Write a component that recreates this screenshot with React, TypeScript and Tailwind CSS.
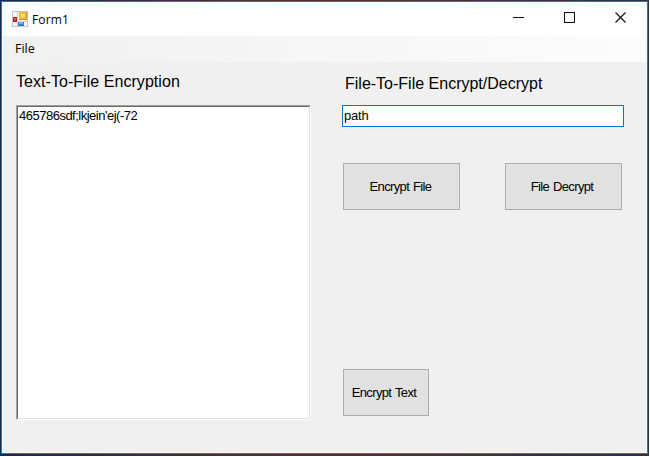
import type { ReactNode } from "react";

function FormIcon() {
  return (
    <svg width="16" height="16" viewBox="0 0 16 16" shapeRendering="crispEdges">
      <rect x="0.5" y="0.5" width="15" height="15" fill="#f4f4f4" stroke="#c4c4c4" />
      <path d="M5.5 1v14M1 10.5h14" stroke="#d0d0d0" />
      <rect x="1" y="6" width="4" height="5" fill="#b52a26" />
      <rect x="2" y="7" width="2" height="2" fill="#d9605a" />
      <rect x="7" y="1" width="8" height="8" fill="#cf9420" />
      <rect x="7" y="1" width="7" height="7" fill="#f0bb35" />
      <rect x="9" y="3" width="4" height="3" fill="#ffe27e" />
      <rect x="6" y="11" width="6" height="4" fill="#3b78d8" />
      <rect x="7" y="11" width="4" height="2" fill="#80aef5" />
    </svg>
  );
}

function TitleBar() {
  return (
    <header className="flex h-[34px] shrink-0 items-center bg-white pl-[9px] font-['Open_Sans','Noto_Sans',sans-serif]">
      <FormIcon />
      <span className="ml-[4px] mt-px text-[12px] leading-4 tracking-[0.15px]">Form1</span>
      <div className="ml-auto flex h-full items-center">
        <svg width="133" height="34" viewBox="0 0 133 34" fill="none" stroke="#111">
          <path d="M0 15.5h11" />
          <rect x="51.5" y="10.5" width="10" height="10" />
          <path d="M102.5 10.5l10 10M112.5 10.5l-10 10" strokeWidth="1.2" />
        </svg>
      </div>
    </header>
  );
}

function Button({ className, children }: { className: string; children: ReactNode }) {
  return (
    <button
      className={`flex h-[47px] items-center justify-center whitespace-nowrap border border-[#adadad] bg-[#e1e1e1] text-[13px] leading-4 tracking-[-0.65px] [word-spacing:1px] ${className}`}
    >
      {children}
    </button>
  );
}

export default function App() {
  return (
    <div className="h-[457px] w-[650px] overflow-hidden bg-white font-['Liberation_Sans',Arial,sans-serif] text-black">
      <div className="h-[456px] w-[649px] bg-linear-to-r from-[#182c49] via-[#572f32] to-[#26324b] pt-px pl-px pr-px pb-[2px]">
        <div className="flex h-[453px] w-[647px] flex-col border border-[#1979ca] bg-[#f0f0f0]">
          <div className="flex h-full flex-col border-x border-b border-[#fbfbfb]">
            <TitleBar />
            <nav className="flex h-[26px] shrink-0 items-center bg-linear-to-r from-[#f0f0f0] to-[#fcfcfc] pl-[12px] font-['Open_Sans','Noto_Sans',sans-serif] text-[12.5px] leading-4">
              File
            </nav>
            <main className="flex">
              <section className="ml-[13px] w-[326px]">
                <h2 className="mt-[10px] whitespace-nowrap text-[16px] leading-5 tracking-[0.05px]">Text-To-File Encryption</h2>
                <div className="mt-[13px] h-[315px] w-[295px] border border-t-[#a0a0a0] border-r-white border-b-white border-l-[#a0a0a0]">
                  <div className="h-full border border-t-[#696969] border-r-[#e3e3e3] border-b-[#e3e3e3] border-l-[#696969] bg-white pl-px pt-px text-[13px] leading-4 tracking-[-0.5px]">
                    465786sdf;lkjein'ej(-72
                  </div>
                </div>
              </section>
              <section className="w-[290px]">
                <h2 className="ml-[3px] mt-[12px] whitespace-nowrap text-[16px] leading-5">File-To-File Encrypt/Decrypt</h2>
                <div className="mt-[11px] h-[22px] w-[282px] border border-[#0078d7] bg-white pl-px pt-[2px] text-[13px] leading-4 tracking-[-0.2px]">
                  path
                </div>
                <div className="ml-px mt-[36px] flex gap-[45px]">
                  <Button className="w-[117px] pr-[2px]">Encrypt File</Button>
                  <Button className="w-[117px] pr-[3px]">File Decrypt</Button>
                </div>
                <Button className="ml-px mt-[159px] w-[86px] pr-[4px]">Encrypt Text</Button>
              </section>
            </main>
          </div>
        </div>
      </div>
    </div>
  );
}
